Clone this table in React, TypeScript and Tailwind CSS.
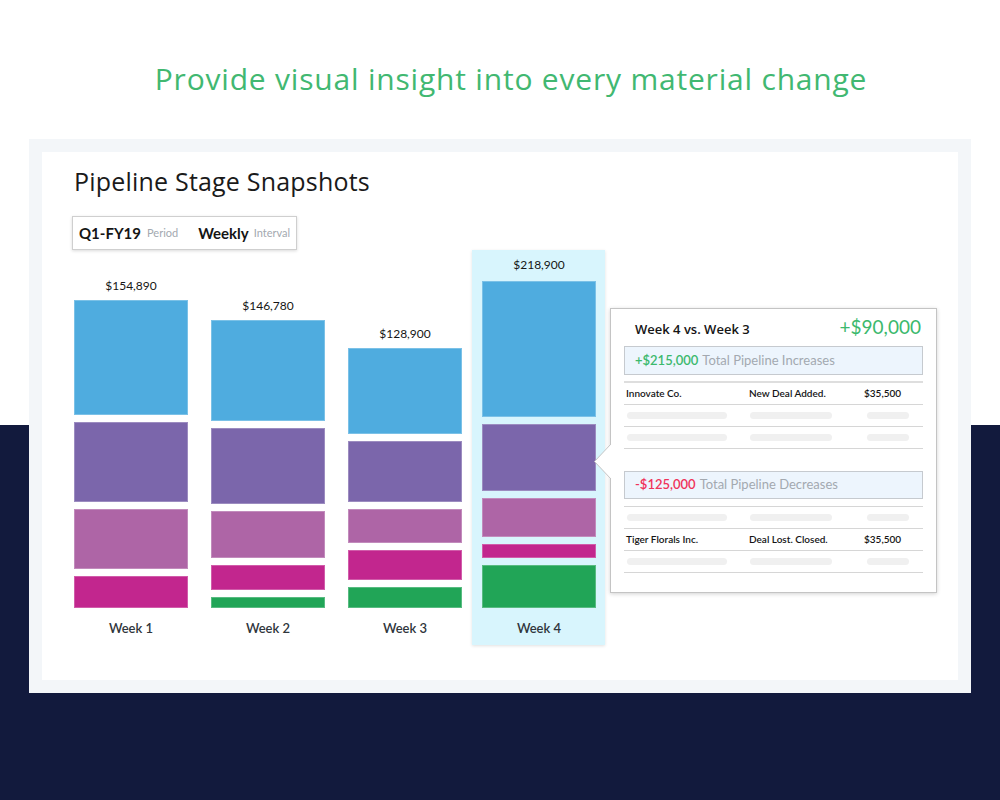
import React from 'react';

const SEG = ['bg-[#4facdf]', 'bg-[#7b66ab]', 'bg-[#ae65a6]', 'bg-[#c2268e]', 'bg-[#21a557]'];

type Week = { label: string; total: string; parts: number[] };

const weeks: Week[] = [
  { label: 'Week 1', total: '$154,890', parts: [115, 80, 60, 32] },
  { label: 'Week 2', total: '$146,780', parts: [101, 76, 47, 25, 11] },
  { label: 'Week 3', total: '$128,900', parts: [86, 61, 34, 30, 21] },
];

const week4: Week = { label: 'Week 4', total: '$218,900', parts: [136, 67, 39, 14, 43] };

function Column({ week, gap = 'mb-[6px]' }: { week: Week; gap?: string }) {
  return (
    <div className="flex w-[114px] flex-col">
      <div className={`${gap} text-center text-[12px] leading-[16px] text-[#151515]`}>{week.total}</div>
      <div className="flex flex-col gap-[7px]">
        {week.parts.map((h, i) => (
          <div key={i} className={`${SEG[i]} border border-white/25`} style={{ height: h }} />
        ))}
      </div>
      <div className="h-[37px] pt-[12px] text-center text-[13px] font-semibold leading-[16px] text-[#30363c]">
        {week.label}
      </div>
    </div>
  );
}

function Placeholder({ w }: { w: string }) {
  return <div className={`h-[7px] rounded-full bg-[#f0f0f0] ${w}`} />;
}

function PlaceholderRow() {
  return (
    <div className="grid h-[22px] grid-cols-[123px_115px_1fr] items-center border-b border-[#d6d6d6] pl-[3px]">
      <Placeholder w="w-[100px]" />
      <Placeholder w="w-[82px]" />
      <div className="pl-[2px]">
        <Placeholder w="w-[42px]" />
      </div>
    </div>
  );
}

function DealRow({ name, what, amount }: { name: string; what: string; amount: string }) {
  return (
    <div className="grid h-[22px] grid-cols-[123px_115px_1fr] items-center border-b border-[#d6d6d6] pl-[2px] text-[10px] font-semibold text-[#151515]">
      <span>{name}</span>
      <span>{what}</span>
      <span>{amount}</span>
    </div>
  );
}

function Comparison() {
  return (
    <div className="absolute left-[536px] top-[58px] w-[327px] border border-[#c4c4c4] bg-white px-[13px] pb-[19px] pt-[4px] shadow-[0_1px_4px_rgba(0,0,0,0.18)]">
      <svg className="absolute left-[-17px] top-[135px]" width="18" height="36" viewBox="0 0 18 36">
        <path d="M18 0 L17 0 L0.5 17.5 L17 35 L18 35 Z" fill="white" />
        <path d="M17 0 L0.5 17.5 L17 35" fill="none" stroke="#c4c4c4" />
      </svg>
      <div className="flex h-[30px] items-baseline justify-between pl-[11px] pr-[2px]">
        <span className="font-['Open_Sans',sans-serif] text-[13px] font-semibold text-[#151515]">Week 4 vs. Week 3</span>
        <span className="text-[19px] text-[#3cb96d]">+$90,000</span>
      </div>
      <div className="mt-[3px] flex h-[29px] items-center border border-[#c6cacf] bg-[#edf5fd] pl-[10px] text-[13px]">
        <span className="font-semibold text-[#3cb96d]">+$215,000</span>
        <span className="ml-[4px] text-[#a3a9b0]">Total Pipeline Increases</span>
      </div>
      <div className="mt-[6px] border-t-2 border-[#dedede]">
        <DealRow name="Innovate Co." what="New Deal Added." amount="$35,500" />
        <PlaceholderRow />
        <PlaceholderRow />
      </div>
      <div className="mt-[22px] flex h-[28px] items-center border border-[#c6cacf] bg-[#edf5fd] pl-[10px] text-[13px]">
        <span className="font-semibold text-[#f0335a]">-$125,000</span>
        <span className="ml-[4px] text-[#a3a9b0]">Total Pipeline Decreases</span>
      </div>
      <div className="mt-[7px] border-t border-[#d6d6d6]">
        <PlaceholderRow />
        <DealRow name="Tiger Florals Inc." what="Deal Lost. Closed." amount="$35,500" />
        <PlaceholderRow />
      </div>
    </div>
  );
}

export default function App() {
  return (
    <div className="min-h-[800px] bg-[linear-gradient(to_bottom,#ffffff_425px,#121a3d_425px)] font-['Lato',sans-serif]">
      <h2 className="pl-[22px] pt-[61px] text-center font-['Open_Sans',sans-serif] text-[30px] leading-[36px] tracking-[0.8px] text-[#41b871]">
        Provide visual insight into every material change
      </h2>

      <div className="mx-[29px] mt-[42px] bg-[#f3f6f9] p-[13px]">
        <div className="bg-white px-[32px] pb-[35px] pt-[15px]">
          <h1 className="font-['Open_Sans',sans-serif] text-[25px] leading-[28px] tracking-[0.2px] text-[#1a1a1a]">
            Pipeline Stage Snapshots
          </h1>

          <div className="mt-[21px] flex h-[34px] w-[225px] -translate-x-[2px] items-center whitespace-nowrap border border-[#cfcfcf] px-[6px] shadow-[0_1px_3px_rgba(0,0,0,0.15)]">
            <span className="text-[15px] font-bold text-[#151515]">Q1-FY19</span>
            <span className="ml-[6px] text-[11px] text-[#a3a9b0]">Period</span>
            <span className="ml-[20px] text-[15px] font-bold text-[#151515]">Weekly</span>
            <span className="ml-[5px] text-[11px] text-[#a3a9b0]">Interval</span>
          </div>

          <div className="relative flex items-end gap-[10px]">
            <div className="flex items-end gap-[23px]">
              {weeks.map((w) => (
                <Column key={w.label} week={w} />
              ))}
            </div>
            <div className="bg-[#d8f5fd] pl-[10px] pr-[9px] pt-[7px] shadow-[0_1px_3px_rgba(0,0,0,0.12)]">
              <Column week={week4} gap="mb-[8px]" />
            </div>
            <Comparison />
          </div>
        </div>
      </div>
    </div>
  );
}
